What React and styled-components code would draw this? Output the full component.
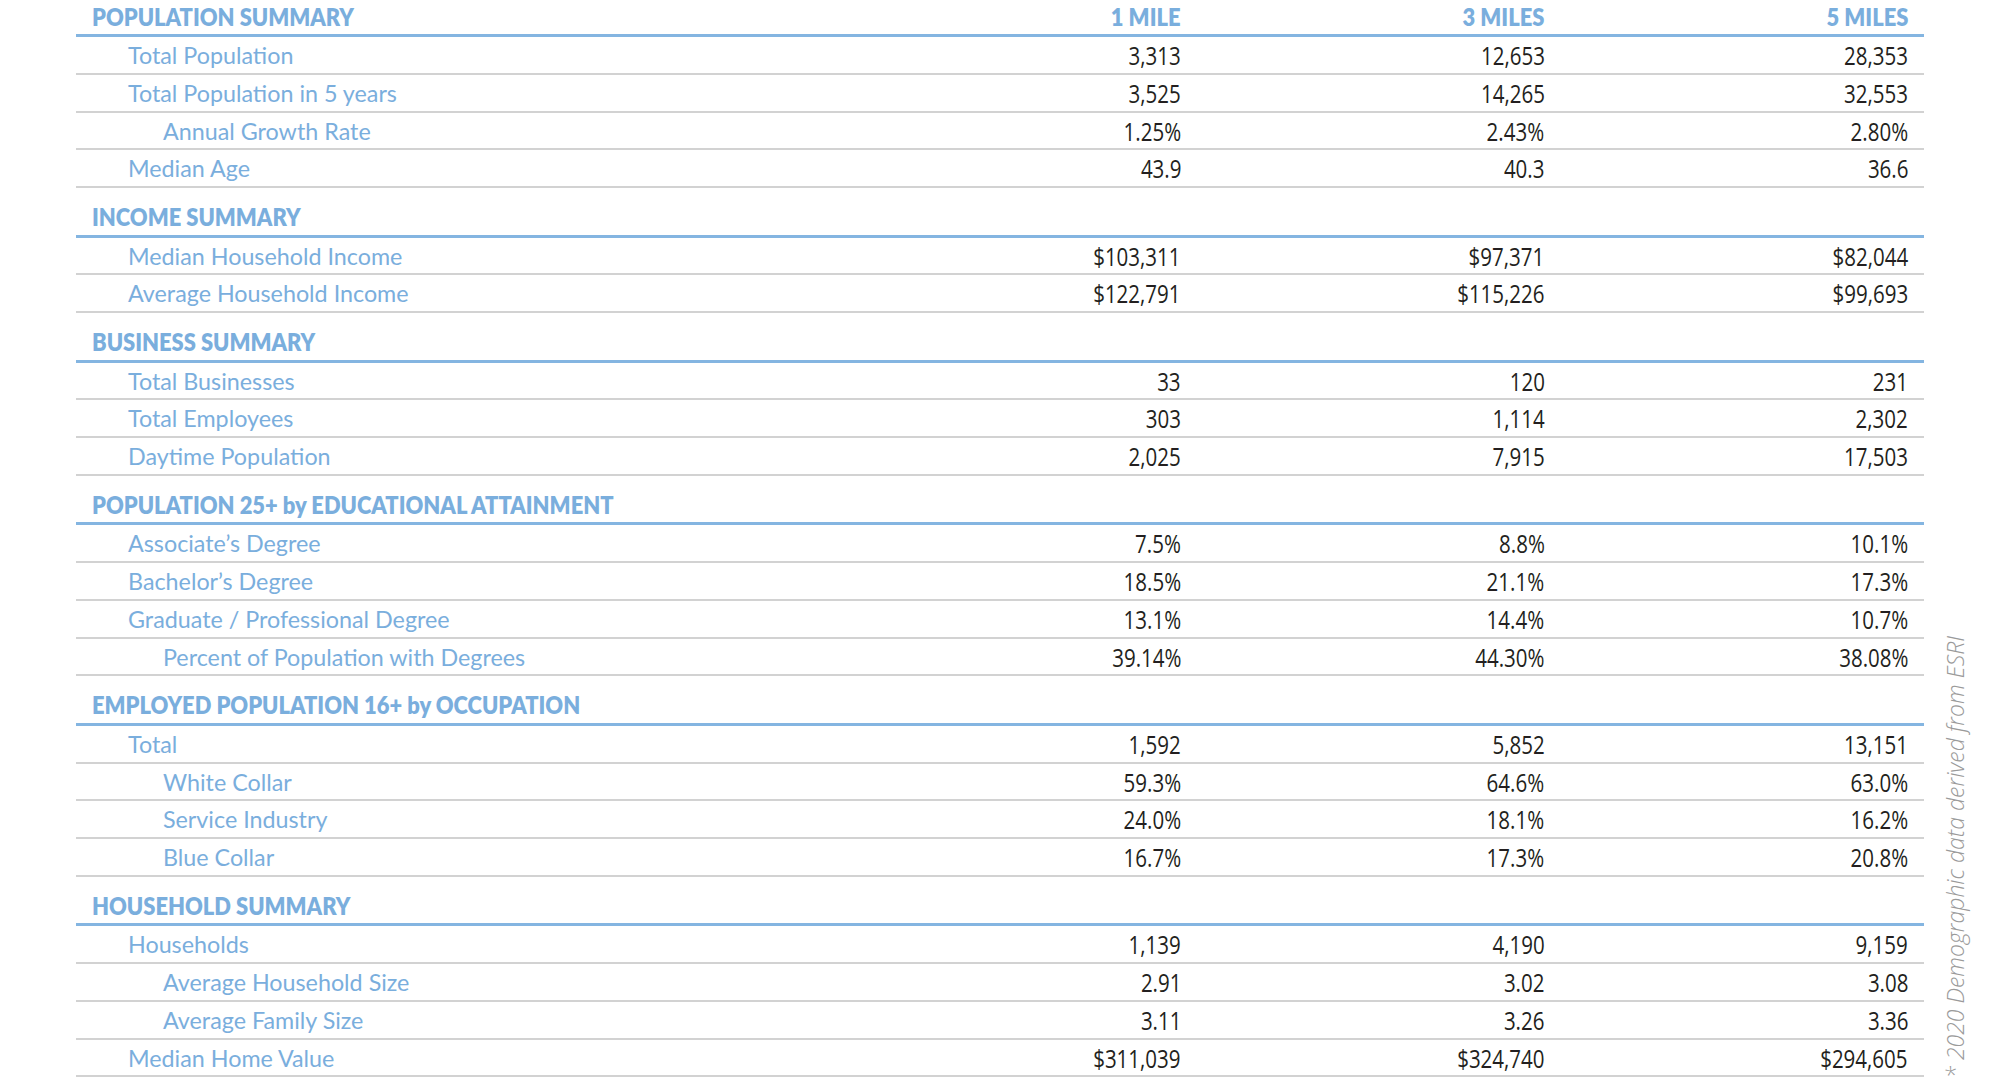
import React from "react";
import styled, { createGlobalStyle } from "styled-components";

const BLUE = "#7aaedd";
const BLUE_LINE = "#84b5e1";
const GREY_LINE = "#d2d2d2";
const INK = "#231f20";

const sections = [
  {
    title: "POPULATION SUMMARY",
    columns: ["1 MILE", "3 MILES", "5 MILES"],
    rows: [
      ["Total Population", 1, "3,313", "12,653", "28,353"],
      ["Total Population in 5 years", 1, "3,525", "14,265", "32,553"],
      ["Annual Growth Rate", 2, "1.25%", "2.43%", "2.80%"],
      ["Median Age", 1, "43.9", "40.3", "36.6"],
    ],
  },
  {
    title: "INCOME SUMMARY",
    rows: [
      ["Median Household Income", 1, "$103,311", "$97,371", "$82,044"],
      ["Average Household Income", 1, "$122,791", "$115,226", "$99,693"],
    ],
  },
  {
    title: "BUSINESS SUMMARY",
    rows: [
      ["Total Businesses", 1, "33", "120", "231"],
      ["Total Employees", 1, "303", "1,114", "2,302"],
      ["Daytime Population", 1, "2,025", "7,915", "17,503"],
    ],
  },
  {
    title: "POPULATION 25+ by EDUCATIONAL ATTAINMENT",
    rows: [
      ["Associate’s Degree", 1, "7.5%", "8.8%", "10.1%"],
      ["Bachelor’s Degree", 1, "18.5%", "21.1%", "17.3%"],
      ["Graduate / Professional Degree", 1, "13.1%", "14.4%", "10.7%"],
      ["Percent of Population with Degrees", 2, "39.14%", "44.30%", "38.08%"],
    ],
  },
  {
    title: "EMPLOYED POPULATION 16+ by OCCUPATION",
    rows: [
      ["Total", 1, "1,592", "5,852", "13,151"],
      ["White Collar", 2, "59.3%", "64.6%", "63.0%"],
      ["Service Industry", 2, "24.0%", "18.1%", "16.2%"],
      ["Blue Collar", 2, "16.7%", "17.3%", "20.8%"],
    ],
  },
  {
    title: "HOUSEHOLD SUMMARY",
    rows: [
      ["Households", 1, "1,139", "4,190", "9,159"],
      ["Average Household Size", 2, "2.91", "3.02", "3.08"],
      ["Average Family Size", 2, "3.11", "3.26", "3.36"],
      ["Median Home Value", 1, "$311,039", "$324,740", "$294,605"],
    ],
  },
];

const App = () => {
  return (
    <>
      <GlobalStyle />
      <Page>
        <Table>
          {sections.map((section, i) => (
            <Section key={section.title}>
              <HeaderRow $first={i === 0}>
                <HeaderCell>
                  <HeaderText>{section.title}</HeaderText>
                </HeaderCell>
                {(section.columns || ["", "", ""]).map((col, j) => (
                  <HeaderCell key={j} $right>
                    <HeaderText $right>{col}</HeaderText>
                  </HeaderCell>
                ))}
              </HeaderRow>
              {section.rows.map(([label, level, ...values]) => (
                <DataRow key={label}>
                  <Label $level={level}>{label}</Label>
                  {values.map((v, j) => (
                    <ValueCell key={j}>
                      <Value>{v}</Value>
                    </ValueCell>
                  ))}
                </DataRow>
              ))}
            </Section>
          ))}
        </Table>
        <Note>* 2020 Demographic data derived from ESRI</Note>
      </Page>
    </>
  );
};

const GlobalStyle = createGlobalStyle`
  html, body {
    margin: 0;
    padding: 0;
    background: #ffffff;
  }
  body {
    font-family: "Lato", "Open Sans", sans-serif;
  }
`;

const Page = styled.div`
  width: 2000px;
  height: 1080px;
  display: flex;
  flex-direction: row;
  padding-left: 76px;
  box-sizing: border-box;
  overflow: hidden;
`;

const Table = styled.div`
  width: 1848px;
  display: flex;
  flex-direction: column;
`;

const Section = styled.div`
  display: flex;
  flex-direction: column;
`;

const rowGrid = `
  display: grid;
  grid-template-columns: 1fr 363.5px 363.5px 363.5px;
  padding: 0 16px;
  box-sizing: border-box;
`;

const HeaderRow = styled.div`
  ${rowGrid}
  height: ${(props) => (props.$first ? "37px" : "49.5px")};
  align-items: end;
  padding-bottom: 1.5px;
  border-bottom: 3px solid ${BLUE_LINE};
`;

const HeaderCell = styled.div`
  text-align: ${(props) => (props.$right ? "right" : "left")};
  white-space: nowrap;
  line-height: 26px;
`;

// semibold condensed caps, Fira-like
const HeaderText = styled.span`
  display: inline-block;
  font-family: "Lato", "Open Sans", sans-serif;
  font-weight: 800;
  font-size: 25px;
  line-height: 26px;
  color: ${BLUE};
  transform: scaleX(0.876);
  transform-origin: ${(props) => (props.$right ? "right" : "left")} center;
`;

const DataRow = styled.div`
  ${rowGrid}
  height: 37.75px;
  padding-top: 1px;
  border-bottom: 2px solid ${GREY_LINE};
`;

const Label = styled.div`
  padding-left: ${(props) => (props.$level === 2 ? "71px" : "36px")};
  font-family: "Lato", "Open Sans", sans-serif;
  font-weight: 400;
  font-size: 23.3px;
  line-height: 34.75px;
  color: ${BLUE};
  white-space: nowrap;
`;

const ValueCell = styled.div`
  text-align: right;
  line-height: 34.75px;
  white-space: nowrap;
`;

const Value = styled.span`
  display: inline-block;
  font-family: "Open Sans", "Noto Sans", sans-serif;
  font-weight: 400;
  font-size: 25px;
  color: ${INK};
  transform: scaleX(0.82);
  transform-origin: right center;
`;

const Note = styled.div`
  align-self: flex-end;
  margin-left: 20px;
  margin-bottom: 2px;
  writing-mode: vertical-rl;
  transform: rotate(180deg);
  font-family: "Open Sans", "Noto Sans", sans-serif;
  font-style: italic;
  font-weight: 300;
  font-size: 23px;
  line-height: 22px;
  color: #9a9a9a;
  white-space: nowrap;
`;

export default App;
